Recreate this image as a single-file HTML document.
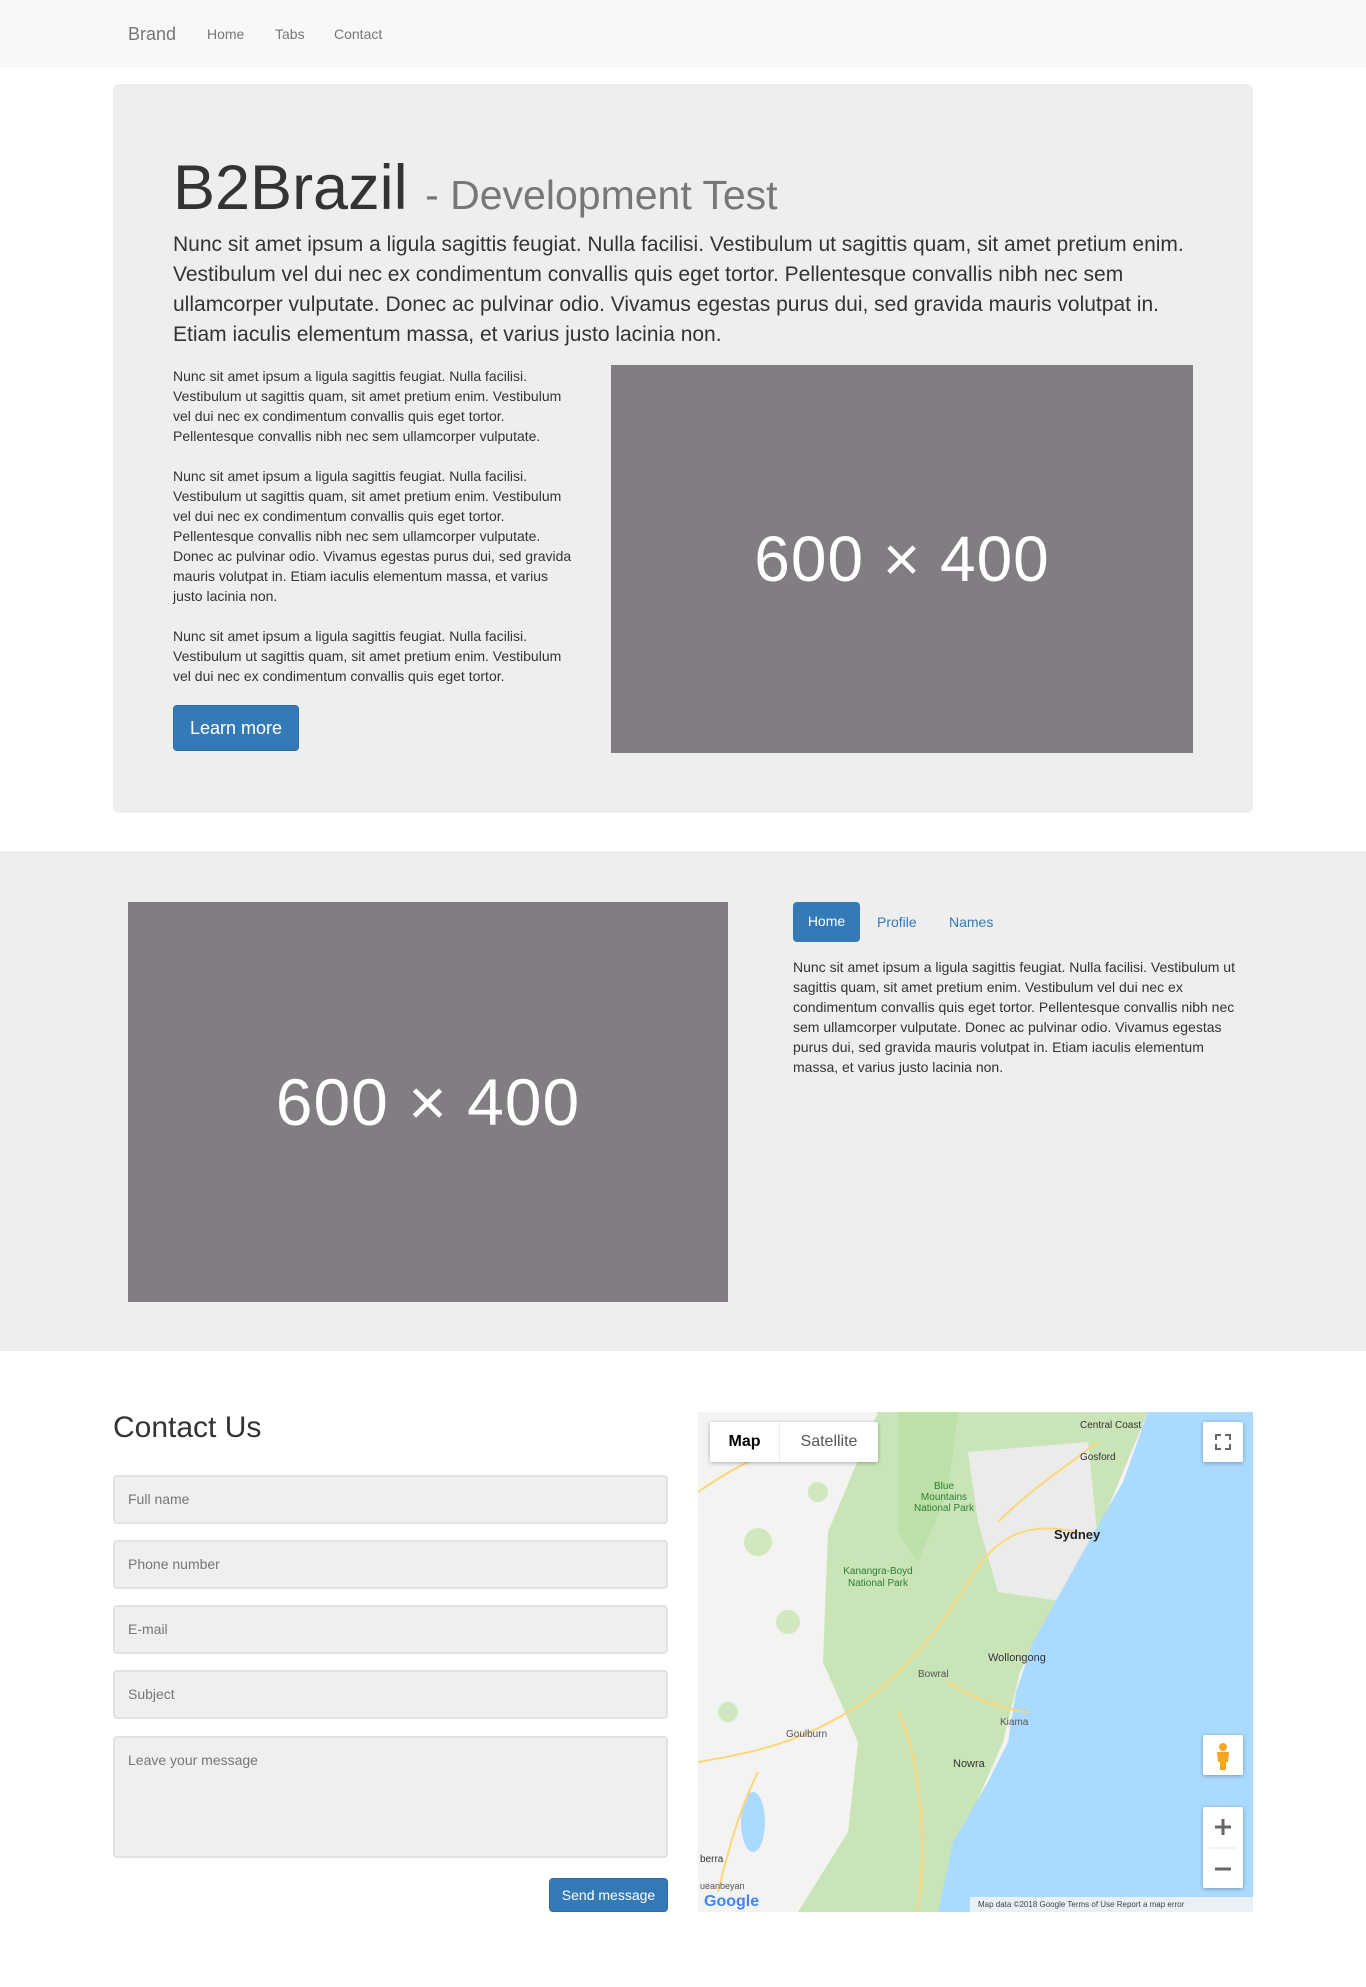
<!DOCTYPE html>
<html><head><meta charset="utf-8"><style>
*{box-sizing:border-box;margin:0;padding:0}
body{width:1366px;height:1987px;background:#fff;font-family:"Liberation Sans",Arial,sans-serif;color:#333;position:relative;overflow:hidden}
.abs{position:absolute}
.nav{left:0;top:0;width:1366px;height:68px;background:#f8f8f8}
.nav span{position:absolute;top:0;line-height:68px;color:#777;font-size:14px}
.jumbo{left:113px;top:84px;width:1140px;height:729px;background:#eee;border-radius:6px}
.ph{background:#827d82;color:#fff;display:flex;align-items:center;justify-content:center;font-weight:300;letter-spacing:1px}
.sm{font-size:14px;line-height:20px;color:#333}
.inp{left:113px;width:555px;height:49px;background:#f0eeee;border:2px solid #e2e2e2;border-radius:4px;padding:0 0 0 13px;font-size:14px;color:#777;line-height:45px}
.btn{background:#337ab7;color:#fff;border-radius:4px;border:1px solid #2e6da4;text-align:center}
.ctl{background:#fff;box-shadow:0 1px 4px rgba(0,0,0,.3);border-radius:2px}
</style></head><body>
<div class="abs nav">
<span style="left:128px;font-size:18px">Brand</span>
<span style="left:207px">Home</span>
<span style="left:275px">Tabs</span>
<span style="left:334px">Contact</span>
</div>

<div class="abs jumbo"></div>
<div class="abs" style="left:173px;top:148px;font-size:63px;line-height:80px;white-space:nowrap">B2Brazil <span style="font-size:41px;color:#777">- Development Test</span></div>
<div class="abs" style="left:173px;top:230px;width:1025px;font-size:21px;line-height:30px">Nunc sit amet ipsum a ligula sagittis feugiat. Nulla facilisi. Vestibulum ut sagittis quam, sit amet pretium enim. Vestibulum vel dui nec ex condimentum convallis quis eget tortor. Pellentesque convallis nibh nec sem ullamcorper vulputate. Donec ac pulvinar odio. Vivamus egestas purus dui, sed gravida mauris volutpat in. Etiam iaculis elementum massa, et varius justo lacinia non.</div>
<div class="abs sm" style="left:173px;top:366px;width:400px">
<p style="margin-bottom:20px">Nunc sit amet ipsum a ligula sagittis feugiat. Nulla facilisi. Vestibulum ut sagittis quam, sit amet pretium enim. Vestibulum vel dui nec ex condimentum convallis quis eget tortor. Pellentesque convallis nibh nec sem ullamcorper vulputate.</p>
<p style="margin-bottom:20px">Nunc sit amet ipsum a ligula sagittis feugiat. Nulla facilisi. Vestibulum ut sagittis quam, sit amet pretium enim. Vestibulum vel dui nec ex condimentum convallis quis eget tortor. Pellentesque convallis nibh nec sem ullamcorper vulputate. Donec ac pulvinar odio. Vivamus egestas purus dui, sed gravida mauris volutpat in. Etiam iaculis elementum massa, et varius justo lacinia non.</p>
<p>Nunc sit amet ipsum a ligula sagittis feugiat. Nulla facilisi. Vestibulum ut sagittis quam, sit amet pretium enim. Vestibulum vel dui nec ex condimentum convallis quis eget tortor.</p>
</div>
<div class="abs btn" style="left:173px;top:705px;width:126px;height:46px;line-height:44px;font-size:18px">Learn more</div>
<div class="abs ph" style="left:611px;top:365px;width:582px;height:388px;font-size:64px">600 × 400</div>

<div class="abs" style="left:0;top:851px;width:1366px;height:500px;background:#eee"></div>
<div class="abs ph" style="left:128px;top:902px;width:600px;height:400px;font-size:66px">600 × 400</div>
<div class="abs btn" style="left:793px;top:902px;width:67px;height:40px;line-height:38px;font-size:14px;border:none">Home</div>
<div class="abs" style="left:877px;top:902px;line-height:40px;font-size:14px;color:#337ab7">Profile</div>
<div class="abs" style="left:949px;top:902px;line-height:40px;font-size:14px;color:#337ab7">Names</div>
<div class="abs sm" style="left:793px;top:957px;width:450px">Nunc sit amet ipsum a ligula sagittis feugiat. Nulla facilisi. Vestibulum ut sagittis quam, sit amet pretium enim. Vestibulum vel dui nec ex condimentum convallis quis eget tortor. Pellentesque convallis nibh nec sem ullamcorper vulputate. Donec ac pulvinar odio. Vivamus egestas purus dui, sed gravida mauris volutpat in. Etiam iaculis elementum massa, et varius justo lacinia non.</div>

<div class="abs" style="left:113px;top:1408px;font-size:30px;line-height:40px">Contact Us</div>
<div class="abs inp" style="top:1475px">Full name</div>
<div class="abs inp" style="top:1540px">Phone number</div>
<div class="abs inp" style="top:1605px">E-mail</div>
<div class="abs inp" style="top:1670px">Subject</div>
<div class="abs inp" style="top:1736px;height:122px">Leave your message</div>
<div class="abs btn" style="left:549px;top:1878px;width:119px;height:34px;line-height:32px;font-size:14px">Send message</div>

<svg class="abs" style="left:698px;top:1412px" width="555" height="500" viewBox="0 0 555 500">
<rect width="555" height="500" fill="#f3f3f1"/>
<polygon points="180,0 450,0 400,120 350,205 322,260 305,330 270,410 240,500 100,500 150,420 160,330 125,250 130,120" fill="#c9e5b8"/>
<polygon points="200,0 260,0 250,80 220,150 200,120" fill="#bddfa8"/>
<polygon points="270,40 390,30 400,130 370,190 300,180 280,110" fill="#ebecea"/>
<circle cx="60" cy="130" r="14" fill="#cfe8c0"/><circle cx="90" cy="210" r="12" fill="#cfe8c0"/><circle cx="30" cy="300" r="10" fill="#cfe8c0"/><circle cx="120" cy="80" r="10" fill="#cfe8c0"/>
<polygon points="450,0 555,0 555,500 240,500 255,430 290,370 310,330 318,280 335,230 385,140 425,70" fill="#aadaff"/>
<ellipse cx="55" cy="410" rx="12" ry="30" fill="#aadaff"/>
<g fill="none" stroke="#fcd67a" stroke-width="2">
<path d="M0,350 C60,340 100,330 150,300 C200,270 240,220 270,170 C300,120 330,110 380,120"/>
<path d="M300,110 C330,80 360,60 400,30"/>
<path d="M250,270 C280,290 320,300 330,300"/>
<path d="M200,300 C220,340 230,420 220,500"/>
<path d="M0,80 C30,60 60,40 110,30"/>
<path d="M60,360 C40,400 30,440 20,480"/>
</g>
<g font-family="Liberation Sans,Arial,sans-serif" font-size="10">
<text x="382" y="16" fill="#333">Central Coast</text>
<text x="382" y="48" fill="#333">Gosford</text>
<text x="246" y="77" fill="#2e7d32" text-anchor="middle">Blue</text>
<text x="246" y="88" fill="#2e7d32" text-anchor="middle">Mountains</text>
<text x="246" y="99" fill="#2e7d32" text-anchor="middle">National Park</text>
<text x="356" y="127" fill="#222" font-size="13" font-weight="bold">Sydney</text>
<text x="180" y="162" fill="#2e7d32" text-anchor="middle">Kanangra-Boyd</text>
<text x="180" y="174" fill="#2e7d32" text-anchor="middle">National Park</text>
<text x="290" y="249" fill="#333" font-size="11">Wollongong</text>
<text x="220" y="265" fill="#555">Bowral</text>
<text x="302" y="313" fill="#555">Kiama</text>
<text x="88" y="325" fill="#555">Goulburn</text>
<text x="255" y="355" fill="#333" font-size="11">Nowra</text>
<text x="2" y="450" fill="#333">berra</text>
<text x="2" y="477" fill="#555" font-size="9">ueanbeyan</text>
<text x="6" y="494" fill="#4285f4" font-size="16" font-weight="bold">Google</text>
</g>
<rect x="272" y="485" width="283" height="15" fill="rgba(245,245,245,.85)"/>
<text x="280" y="495" font-family="Liberation Sans,Arial,sans-serif" font-size="8" fill="#444">Map data ©2018 Google   Terms of Use   Report a map error</text>
</svg>
<div class="abs ctl" style="left:710px;top:1422px;width:168px;height:40px;display:flex;font-size:16px;line-height:40px">
<div style="width:70px;text-align:center;color:#000;font-weight:bold;border-right:1px solid #eee">Map</div><div style="flex:1;text-align:center;color:#555">Satellite</div></div>
<div class="abs ctl" style="left:1203px;top:1422px;width:40px;height:40px">
<svg width="40" height="40"><path d="M13,18V13h5M22,13h5v5M27,22v5h-5M18,27h-5v-5" fill="none" stroke="#666" stroke-width="2"/></svg></div>
<div class="abs ctl" style="left:1203px;top:1735px;width:40px;height:40px">
<svg width="40" height="40"><circle cx="20" cy="12" r="4" fill="#f5a623"/><path d="M14,17h12l-1,10h-2v8h-6v-8h-2z" fill="#f5a623"/></svg></div>
<div class="abs ctl" style="left:1203px;top:1807px;width:40px;height:81px">
<svg width="40" height="81"><path d="M12,20h16M20,12v16M12,62h16" stroke="#666" stroke-width="3"/><path d="M6,41h28" stroke="#e6e6e6"/></svg></div>
</body></html>
